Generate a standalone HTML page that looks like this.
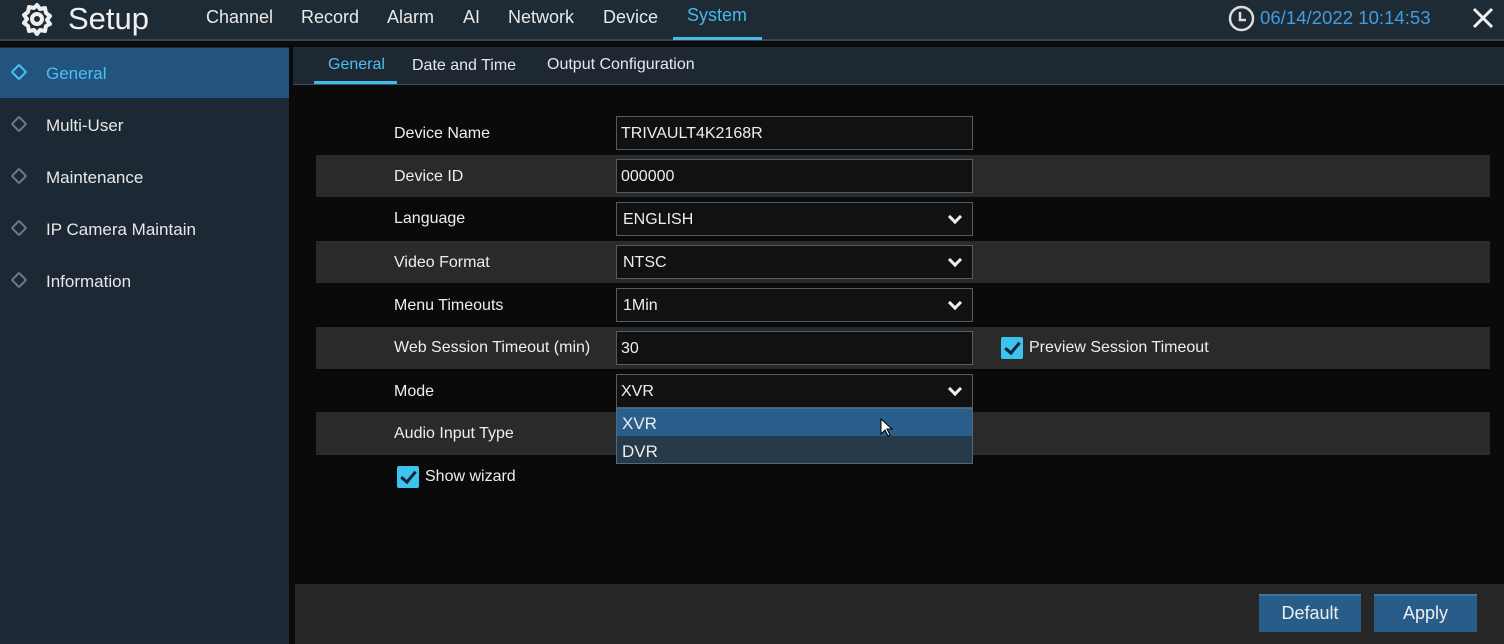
<!DOCTYPE html>
<html><head><style>
*{margin:0;padding:0;box-sizing:border-box}
body{width:1504px;height:644px;background:#0a0a0a;font-family:"Liberation Sans",sans-serif;position:relative;overflow:hidden;color:#eee}
.a{position:absolute}
.top{left:0;top:0;width:1504px;height:41px;background:#1f2b34;border-bottom:2px solid #3a4650}
.nav{top:7px;font-size:18px;color:#e8e8e8}
.side{left:0;top:47px;width:289px;height:597px;background:#1c2834}
.si{left:0;width:289px;height:50px;font-size:17px;color:#e8e8e8;line-height:52px;padding-left:46px}
.si .d{position:absolute;left:13px;top:18px;width:12px;height:12px;border:2px solid #6b7a85;transform:rotate(45deg);border-radius:2px}
.tabs{left:293px;top:47px;width:1211px;height:38px;background:#1d2833;border-bottom:1px solid #3a5060}
.tab{top:9px;font-size:16px;color:#e8e8e8}
.row{left:316px;width:1174px;height:42px;background:#2a2a2a}
.lbl{left:394px;font-size:16px;color:#eee}
.in{left:616px;width:357px;height:34px;background:#111;border:1px solid #4e5d6a;font-size:16px;padding-left:4px;line-height:34px}
.chev{position:absolute;right:12px;top:9px;width:10px;height:10px;border-right:3px solid #eee;border-bottom:3px solid #eee;transform:rotate(45deg)}
.cb{width:22px;height:22px;background:#3cc3ee;border-radius:2px}
.cb:after{content:"";position:absolute;left:7px;top:2px;width:6px;height:12px;border-right:3px solid #123;border-bottom:3px solid #123;transform:rotate(40deg)}
.btn{top:594px;height:38px;background:#285c89;font-size:18px;color:#eee;text-align:center;line-height:34px;border-top:2px solid #3a72a0}
</style></head><body>
<div class="a top"></div>
<svg class="a" style="left:20px;top:2px" width="34" height="34" viewBox="0 0 34 34"><g fill="none" stroke="#eee" stroke-width="4"><path d="M17 3l3 4 5-1 1 5 4 3-3 4 3 4-4 2-1 5-5-1-3 4-3-4-5 1-1-5-4-3 3-4-3-4 4-3 1-5 5 1z" stroke-linejoin="round"/><circle cx="17" cy="17" r="5"/></g></svg>
<div class="a" style="left:68px;top:1px;font-size:31px;color:#f0f0f0">Setup</div>
<div class="a nav" style="left:206px">Channel</div>
<div class="a nav" style="left:301px">Record</div>
<div class="a nav" style="left:387px">Alarm</div>
<div class="a nav" style="left:463px">AI</div>
<div class="a nav" style="left:508px">Network</div>
<div class="a nav" style="left:603px">Device</div>
<div class="a nav" style="left:687px;top:5px;color:#45b8ec">System</div>
<div class="a" style="left:673px;top:37px;width:89px;height:3px;background:#45b8ec"></div>
<svg class="a" style="left:1228px;top:5px" width="27" height="27" viewBox="0 0 27 27"><circle cx="13.5" cy="13.5" r="11.5" fill="none" stroke="#ddd" stroke-width="2.5"/><path d="M12 7v8h6" fill="none" stroke="#ddd" stroke-width="2.5"/></svg>
<div class="a" style="left:1260px;top:7px;font-size:18.6px;color:#3d9ee0">06/14/2022 10:14:53</div>
<svg class="a" style="left:1472px;top:7px" width="22" height="22"><path d="M2 2L20 20M20 2L2 20" stroke="#f0f0f0" stroke-width="3"/></svg>

<div class="a side"></div>
<div class="a si" style="top:48px;background:#23547f;color:#4cc0ef"><span class="d" style="border-color:#4cc0ef"></span>General</div>
<div class="a si" style="top:100px"><span class="d"></span>Multi-User</div>
<div class="a si" style="top:152px"><span class="d"></span>Maintenance</div>
<div class="a si" style="top:204px"><span class="d"></span>IP Camera Maintain</div>
<div class="a si" style="top:256px"><span class="d"></span>Information</div>

<div class="a tabs"></div>
<div class="a tab" style="left:328px;top:56px;color:#4cc0ef">General</div>
<div class="a" style="left:314px;top:81px;width:83px;height:3px;background:#45b8ec"></div>
<div class="a tab" style="left:412px;top:57px">Date and Time</div>
<div class="a tab" style="left:547px;top:56px">Output Configuration</div>

<div class="a row" style="top:155px"></div>
<div class="a row" style="top:241px"></div>
<div class="a row" style="top:327px"></div>
<div class="a row" style="top:412px;height:43px"></div>

<div class="a lbl" style="top:125px">Device Name</div>
<div class="a lbl" style="top:168px">Device ID</div>
<div class="a lbl" style="top:210px">Language</div>
<div class="a lbl" style="top:254px">Video Format</div>
<div class="a lbl" style="top:297px">Menu Timeouts</div>
<div class="a lbl" style="top:339px">Web Session Timeout (min)</div>
<div class="a lbl" style="top:383px">Mode</div>
<div class="a lbl" style="top:425px">Audio Input Type</div>

<div class="a in" style="top:116px">TRIVAULT4K2168R</div>
<div class="a in" style="top:159px">000000</div>
<div class="a in" style="top:202px;padding-left:6px">ENGLISH<span class="chev"></span></div>
<div class="a in" style="top:245px;padding-left:6px">NTSC<span class="chev"></span></div>
<div class="a in" style="top:288px;padding-left:6px">1Min<span class="chev"></span></div>
<div class="a in" style="top:331px">30</div>
<div class="a in" style="top:374px">XVR<span class="chev"></span></div>
<div class="a" style="left:616px;top:408px;width:357px;height:56px;background:#263a4a;border:1px solid #4e6a80"></div>
<div class="a" style="left:617px;top:409px;width:355px;height:27px;background:#2a5f8c"></div>
<div class="a" style="left:622px;top:414px;font-size:17px">XVR</div>
<div class="a" style="left:622px;top:442px;font-size:17px">DVR</div>
<svg class="a" style="left:880px;top:418px" width="14" height="20"><path d="M1 1v15l4-4 3 6 2-1-3-6h5z" fill="#fff" stroke="#000"/></svg>

<div class="a cb" style="left:1001px;top:337px"></div>
<div class="a" style="left:1029px;top:339px;font-size:16px">Preview Session Timeout</div>
<div class="a cb" style="left:397px;top:466px"></div>
<div class="a" style="left:425px;top:468px;font-size:16px">Show wizard</div>

<div class="a" style="left:295px;top:584px;width:1209px;height:60px;background:#262626"></div>
<div class="a btn" style="left:1259px;width:102px">Default</div>
<div class="a btn" style="left:1374px;width:103px">Apply</div>
</body></html>
